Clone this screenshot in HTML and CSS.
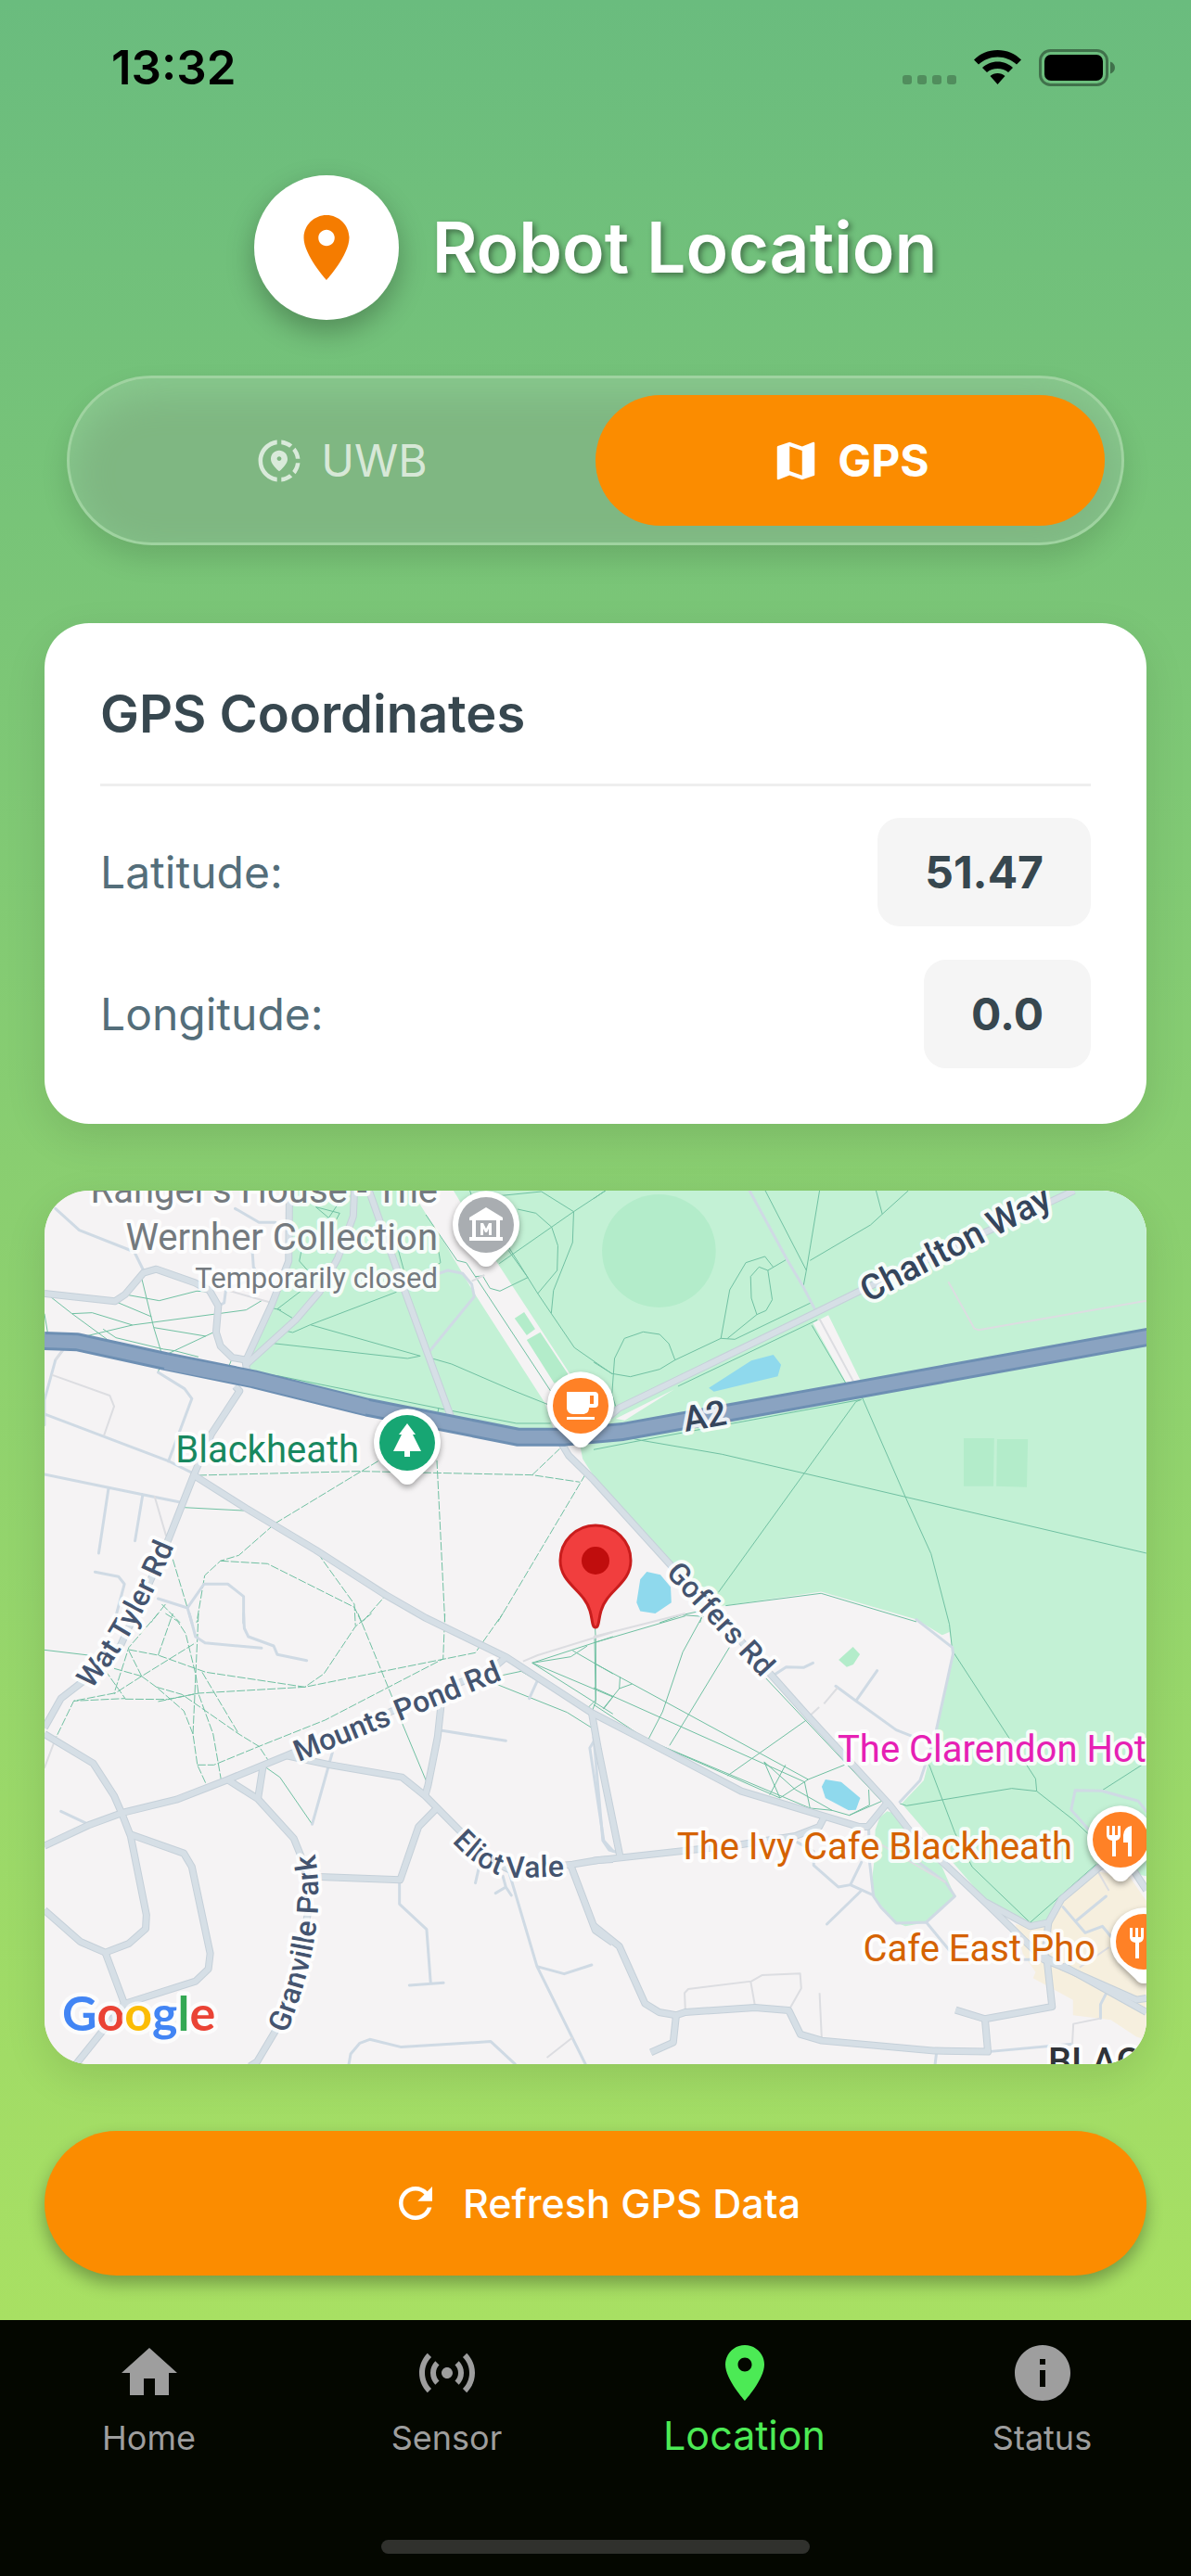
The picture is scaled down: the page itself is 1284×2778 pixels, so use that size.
FILE: index.html
```html
<!DOCTYPE html>
<html lang="en">
<head>
<meta charset="utf-8">
<meta name="viewport" content="width=device-width, initial-scale=1">
<title>Robot Location</title>
<link rel="stylesheet" href="styles.css">
</head>
<body>
<div class="status-bar">
  <time class="status-time">13:32</time>
  <div class="status-icons">
    <svg class="signal" viewBox="0 0 58 10" aria-label="No signal"><rect width="10" height="10" rx="3"/><rect x="16" width="10" height="10" rx="3"/><rect x="32" width="10" height="10" rx="3"/><rect x="48" width="10" height="10" rx="3"/></svg>
    <svg class="wifi" viewBox="0 0 51 38" aria-label="Wi-Fi"><path d="M25.500 0C35.500 0 44.500 4 51 10.500L46 15.500C40.500 10.500 33.500 7.500 25.500 7.500S10.500 10.500 5 15.500L0 10.500C6.500 4 15.500 0 25.500 0zM25.500 12.500C32 12.500 37.500 15 42 19L37 24C34 21.500 30 20 25.500 20S17 21.500 14 24L9 19C13.500 15 19 12.500 25.500 12.500zM25.500 25C28.500 25 31.500 26 33.500 28L25.500 37L17.500 28C19.500 26 22.500 25 25.500 25z"/></svg>
    <svg class="battery" viewBox="0 0 82 40" aria-label="Battery full"><rect x="1.500" y="1.500" width="72" height="37" rx="11" fill="none" stroke="#000" stroke-opacity=".4" stroke-width="3"/><rect x="6" y="6" width="63" height="28" rx="7"/><path d="M77 13.500c3 1 5 3.500 5 6.500s-2 5.500-5 6.500z" fill-opacity=".4"/></svg>
  </div>
</div>

<main class="screen">
  <header class="hero">
    <span class="hero-badge"><svg class="hero-icon" viewBox="0 0 24 24" aria-hidden="true"><path d="M12 2C8.130 2 5 5.130 5 9c0 5.250 7 13 7 13s7-7.750 7-13c0-3.870-3.130-7-7-7zm0 9.500c-1.380 0-2.500-1.120-2.500-2.500s1.120-2.500 2.500-2.500 2.500 1.120 2.500 2.500-1.120 2.500-2.500 2.500z"/></svg></span>
    <h1 class="hero-title">Robot Location</h1>
  </header>

  <div class="tabs" role="tablist" aria-label="Positioning system">
    <button class="tab" type="button" role="tab" aria-selected="false">
      <svg class="tab-icon" viewBox="0 0 24 24" aria-hidden="true"><path d="M13.020 19.930v2.020c2.010-.2 3.840-1 5.320-2.210l-1.420-1.430c-1.110.86-2.440 1.440-3.900 1.620zM4.030 12c0-4.050 3.030-7.410 6.950-7.930V2.050C5.950 2.580 2.030 6.840 2.030 12c0 5.160 3.920 9.420 8.950 9.950v-2.020C7.060 19.410 4.030 16.050 4.030 12zm15.920-1h2.020c-.2-2.010-1-3.840-2.210-5.320l-1.430 1.430c.86 1.100 1.440 2.430 1.620 3.890zm-1.610-6.740c-1.480-1.210-3.320-2.010-5.320-2.210v2.020c1.460.18 2.790.76 3.900 1.620l1.420-1.430zm-.01 12.640l1.430 1.420c1.210-1.480 2.010-3.310 2.210-5.320h-2.020c-.18 1.460-.76 2.790-1.620 3.900zM16 11.100C16 8.610 14.100 7 12 7s-4 1.610-4 4.100c0 1.660 1.330 3.630 4 5.900 2.670-2.270 4-4.240 4-5.900zm-4 .9c-.59 0-1.070-.48-1.070-1.070s.48-1.070 1.070-1.070 1.070.48 1.070 1.070S12.590 12 12 12z"/></svg>
      <span>UWB</span>
    </button>
    <button class="tab tab-active" type="button" role="tab" aria-selected="true">
      <svg class="tab-icon" viewBox="0 0 24 24" aria-hidden="true"><path d="M20.500 3l-.16.03L15 5.100 9 3 3.360 4.900c-.21.07-.36.25-.36.48V20.500c0 .28.22.5.5.5l.16-.03L9 18.900l6 2.100 5.640-1.900c.21-.07.36-.25.36-.48V3.500c0-.28-.22-.5-.5-.5zM15 19l-6-2.110V5l6 2.110V19z"/></svg>
      <span>GPS</span>
    </button>
  </div>

  <section class="card">
    <h2 class="card-title">GPS Coordinates</h2>
    <dl class="readings">
      <div class="reading"><dt>Latitude:</dt><dd>51.47</dd></div>
      <div class="reading"><dt>Longitude:</dt><dd>0.0</dd></div>
    </dl>
  </section>

  <section class="map-card" aria-label="Map of Blackheath">
    <svg class="map" viewBox="48 1284 1188 942" preserveAspectRatio="xMidYMid slice">
      <defs>
        <path id="a2" d="M20 528L110 532L350 594L590 652L900 743L1310 839H1440L1597 822L1757 788L2217 690L3040 513"/>
        <!-- through roads, one group per map tile -->
        <g id="roads">
          <g class="tile-nw">
            <path d="M20 375L212 400L240 378L290 308L325 296L430 340L470 365L494 415L488 500L500 545L532 582L570 590"/>
            <path d="M688 42L686 270L640 410L568 595L572 625"/>
            <path d="M865 42L862 125L820 260L770 370L705 460L570 605"/>
            <path d="M905 42L985 310L1068 580L1130 780"/>
            <path d="M540 675L552 690L475 830L428 960L360 1165L310 1300L225 1520L125 1630L65 1685L20 1780"/>
            <path d="M430 965L570 1070L760 1205L950 1350L1060 1425L1280 1552L1510 1730L1640 1810L1920 1985L2240 2100L2265 2100L2320 2020"/>
            <path d="M1430 860L1450 900L1517 978L1740 1270L1920 1500L2100 1740L2325 2030L2380 2115L2590 2350L2745 2530L2810 2560"/>
          </g>
          <g class="tile-ne">
            <path d="M40 775L70 745L600 440L720 370L1310 42"/>
          </g>
          <g class="tile-sw">
            <path d="M20 390L153 485L210 590L232 650L255 720L298 975L296 1020L250 1068L186 1097L118 1062L20 960"/>
            <path d="M20 752L140 685L232 645L380 602L515 540L680 460L960 320L1240 180L1280 140"/>
            <path d="M255 715L400 776L422 820L472 1100L467 1150L432 1190L238 1263L186 1097"/>
            <path d="M238 1263L105 1460"/>
            <path d="M522 540L602 600L700 728L735 830L740 960L700 1200L650 1350L600 1450L580 1465"/>
            <path d="M616 495L602 600"/>
            <path d="M680 460L800 490L995 530L1058 590L1150 700L1220 790L1290 830L1460 812L1530 798L1570 795"/>
            <path d="M1102 290L1092 400L1066 555L1058 590"/>
            <path d="M1088 632L1040 690L990 862L770 852"/>
            <path d="M1455 815L1522 1025L1570 1065"/>
            <path d="M1512 320L1530 440L1590 790"/>
          </g>
          <g class="tile-se">
            <path d="M0 800L230 770L400 748L550 720L615 690L628 660"/>
            <path d="M0 1010L70 1077L140 1262L178 1290L225 1300L250 1290L440 1275L532 1284L564 1362L622 1382L930 1415L1075 1418L1067 1312L1250 1272L1235 1110"/>
            <path d="M1067 1312L987 1283"/>
            <path d="M225 1300L217 1388L156 1420"/>
            <path d="M1070 935L1190 1012L1240 1000L1275 925L1380 820L1450 790L1507 895"/>
            <path d="M1240 1000L1230 1110L1280 1145L1480 1250L1507 1245"/>
            <path d="M1280 1140L1507 1290"/>
          </g>
        </g>
        <g id="poi">
          <path class="poi-shape" d="M0 45C-4 45-7 43-9 40L-28 22A36 36 0 1 1 28 22L9 40C7 43 4 45 0 45z"/>
        </g>
        <path id="path-charlton" d="M936 1405L1160 1288"/>
        <path id="path-tyler" d="M98 1822Q148 1765 194 1652"/>
        <path id="path-goffers" d="M717 1697L838 1828"/>
        <path id="path-eliot" d="M487 1986Q520 2022 552 2025L640 2023"/>
        <path id="path-granville" d="M309 2193C330 2140 356 2060 336 1984"/>
      </defs>

      <rect class="land" x="48" y="1284" width="1188" height="942"/>

      <g class="tile-nw">
        <path class="park" d="M690 42L692 250L650 400L570 600V640L1000 750L1310 830L1410 820L1385 730L1190 370L1110 210L1020 42z"/>
        <path class="pitch" d="M1302 455L1328 435L1358 490L1335 510zM1335 525L1372 500L1450 640L1410 665z"/>
      </g>
      <g class="tile-ne">
        <path class="park" d="M-382 42L-277 250L-62 640L0 800L-40 850L-30 910L0 965L210 1250L290 1390L360 1385L620 1340L880 1430L950 1480L970 1470L980 1530L930 1810L900 1950L840 2025L1070 2340L1190 2425L1240 2410L1280 2330L1370 2230L1507 2260V42z"/>
        <ellipse class="pitch" cx="178" cy="237" rx="155" ry="183"/>
        <path class="pitch" d="M1009 843H1092L1090 998H1009zM1100 846H1184L1181 1001L1098 998z"/>
        <path class="land" d="M598 470L640 445L727 655L688 662zM60 780L220 685L85 785z"/>
        <path class="water" d="M314 680L430 592L490 573L511 605L502 643L328 692zM145 1275L182 1285L210 1325L212 1375L168 1410L127 1403L117 1375L127 1300z"/>
      </g>
      <g class="tile-se">
        <path class="park" d="M780 660L800 640L830 650L870 710L950 820L985 915L905 1000L850 1012L825 1000L765 920L757 880L765 800L768 700z"/>
        <path class="pitch" d="M668 150L707 108L726 132L708 165L690 173z"/>
        <path class="town" d="M1150 1005L1190 1015L1240 1000L1290 920L1370 835L1460 850L1507 930V1380L1480 1370L1410 1315L1307 1300V1250L1198 1180L1205 1160L1170 1100z"/>
        <path class="water" d="M632 537L675 545L727 597L715 635L695 637L632 597L622 560z"/>
      </g>

      <g class="trails">
        <g class="tile-nw">
          <path d="M20 370L95 440L210 540M95 440L150 437L260 477L125 515M212 400L312 450M240 378L333 398L435 367L480 370M285 325L318 485L342 578L482 500M318 485L460 513M260 477L570 428L612 398M180 490L215 518L345 555L375 560L440 580M20 440L30 510L125 515L215 545L330 575L523 610L530 590M330 628L335 612M170 540L172 525"/>
          <path d="M575 628L660 642L1090 745L1307 795H1400M1095 745L1090 775M635 535L1010 585L1045 577L745 476L980 370M745 476L697 501L675 495M1068 582L1130 603L1290 685L1395 735M720 240L715 270L760 330L655 425L697 455M640 422L665 428M760 95L795 130L835 60M760 95L825 115L805 160M970 170L1000 300M1060 305L1100 275L1095 240M1060 120L1145 268L1170 275L1400 690"/>
          <path d="M1195 320L1215 318L1235 358L1262 367L1338 323L1285 235M1250 60L1375 45L1463 110L1260 278M1180 42L1185 60L1240 140L1310 270L1365 375L1465 550L1568 635M1463 110L1550 42M1463 110L1460 210L1408 365L1402 438M1310 102L1360 115L1403 160L1420 220L1418 300L1365 375"/>
          <path d="M398 1067L575 1078"/>
        </g>
        <g class="tile-ne">
          <path d="M0 68L32 42M468 42L580 300L616 42M580 300L572 350M770 42L787 118L858 42M787 118L755 153L590 268M527 264L475 300L487 395L470 430L445 443L430 390L428 320L451 289L475 300M490 290L467 255L415 275L371 363L347 520L385 523L592 405M445 443L365 520M347 520L222 590L180 620L100 644L50 634L0 597M222 590L205 537L180 507L135 499L84 520L57 585L50 700L60 740M595 478L690 670M230 675L610 460"/>
          <path d="M0 880L130 850L730 718L715 725L340 1342M90 840L130 850L350 895L575 957L850 1033L1507 1215M728 700L850 1033L920 1217L970 1445L978 1530L1205 1945L1208 1985M0 855L20 850M290 1440L300 1400L240 1415L180 1440M240 1415L300 1420M360 1385L620 1345L880 1437"/>
        </g>
        <g class="tile-se">
          <path d="M0 95L250 8M2 0L6 90V280L-20 310M0 160L585 537L684 490M585 537L508 597L148 410M0 240L575 545L590 630L650 637L697 653L790 605M508 597L465 480M465 480L550 570L650 637M0 295L148 410L590 630M148 410L188 318L243 125L296 10M207 427L260 325L370 110M365 525L580 345M480 587L523 490M470 210L785 607M750 570L752 620L697 653M26 308L70 243L72 205M70 243L105 228"/>
          <path d="M835 615L853 622L1140 566L1208 575L1307 667L1350 715M915 490L985 710L1032 820L1190 1000L1370 812M1387 572L1495 490"/>
        </g>
        <g class="tile-sw">
          <path d="M20 118L140 135M620 495L662 530L750 682M1255 230L1445 320L1515 372M1268 200L1320 187L1512 320M1570 75L1350 160L1455 140L1500 105M1350 160L1570 270M1350 160L1570 325M1460 120L1570 195M1520 75L1523 285L1512 320M1545 308L1570 270M990 340L1062 545"/>
        </g>
      </g>
      <g class="trails trails-dashed">
        <g class="tile-nw">
          <path d="M440 963L880 950L1350 962L1480 985M1350 962L1425 877M930 917L650 1118L550 1222L500 1240L457 1287L435 1440M500 1240L628 1249L865 1390L885 1440L950 1352M765 1215L865 1380L868 1450M1090 915L1112 1440M1495 960L1255 1440M370 1235L410 1392M340 1380L390 1440M350 1380L310 1440"/>
        </g>
        <g class="tile-sw">
          <path d="M330 0L250 110L210 258L100 283L50 405M250 117L330 135L460 190L730 238L1195 127L1270 0M330 135L370 0M350 0L383 25L405 65L433 200L440 260L480 390L502 540M440 0L425 390L437 490L462 555M437 490H482L605 430L785 345L1107 147L1112 0M185 183L240 275L100 283M240 277L355 278L440 258L730 238L782 195L868 42L912 0M210 178L285 203L432 95M285 203L210 260M285 203L250 120M285 203L325 238L400 315L425 390M325 238L395 262L550 390L605 430L630 475M450 190L550 390M330 285L440 258M875 0L992 340"/>
        </g>
      </g>

      <g class="streets">
        <g class="tile-nw">
          <path d="M50 100L115 170L265 240L290 300M540 100L605 145H650M587 240L590 290L610 320L515 360L510 405L494 415M1068 565L1192 385L1185 345L1160 310L1120 300L1070 320M20 765L360 918L428 958M20 960L195 1003L390 1050M75 550L50 590L20 720V800M330 630L402 683L422 715L358 918M195 1003L168 1215M288 1025L267 1175M158 1276L222 1291L238 1315L210 1440M330 1362L410 1392L455 1315H520L563 1355V1440M410 1392L422 1440"/>
        </g>
        <g class="tile-ne">
          <path d="M425 42L527 264L570 350L605 430"/>
        </g>
        <g class="tile-sw">
          <path d="M415 0L432 75L458 95L612 112M563 0L565 48L576 75L645 105L655 133L735 152M65 640L140 682M805 450L750 682M1100 378L1278 412M1365 215L1342 275M1525 400L1507 435L1545 735L1570 768M988 865V940L1062 1022L1073 1195M1015 1203L1108 1195M1285 830L1363 1142L1495 1458M1363 1142L1437 1166L1512 1137M1195 872L1205 820M1270 850L1278 885L1250 905M1278 885L1293 912M850 1458L855 1425L880 1390L907 1378L993 1403L1237 1385L1303 1458"/>
        </g>
        <g class="tile-se">
          <path d="M490 200L525 173L572 175L598 160M660 235L715 283L825 377L870 398M715 283L773 185M880 20L978 110L980 130L930 400L890 540L835 610M0 400L25 735L42 765L70 775M750 690L752 800L763 915L783 950L825 1002L907 999L985 915L960 870L880 800M763 912L700 878L667 885L600 815V770L555 740M700 878L730 805M727 900L636 1005M907 999L970 1090M1507 640L1485 607L1385 574L1313 572L1302 635L1350 700M1280 950L1340 1033L1387 1012L1410 1045M1317 993L1397 915M1397 1230L1382 1265V1310M1075 1418L1305 1393M935 1420L931 1458M1160 1120H1230M1070 935L1190 1070"/>
        </g>
      </g>
      <g class="lanes">
        <g class="tile-nw"><path d="M40 638L198 705L210 740L182 835M320 1030L352 1160M520 365L640 405M75 550L50 590M1185 335L1220 315"/></g>
        <g class="tile-ne"><path d="M967 337L1038 488L1050 493L1507 398M615 455L712 668"/></g>
        <g class="tile-sw"><path d="M50 405L20 500M1325 155L1365 135L1570 60M1460 1372L1390 1437"/></g>
        <g class="tile-se"><path d="M0 75L250 0M590 330L615 303M628 292L665 240M250 1285L248 1228L258 1215L430 1190L460 1170L563 1165L566 1213L532 1284M428 1190L440 1270M616 1228L622 1380M1305 1393L1308 1328L1382 1310M1375 835L1405 897M780 745L960 870M1325 1145L1405 1080"/></g>
      </g>

      <use class="road-casing" href="#roads"/>
      <use class="road-fill" href="#roads"/>
      <g class="tile-nw">
        <use class="a2-casing" href="#a2"/>
        <use class="a2-fill" href="#a2"/>
        <path class="a2-junction" d="M350 597L590 652L900 743"/>
      </g>

      <g class="label label-muted" text-anchor="end">
        <text x="472" y="1297">Ranger's House - The</text>
        <text x="472" y="1348">Wernher Collection</text>
        <text class="label-small" x="472" y="1389">Temporarily closed</text>
      </g>
      <text class="label label-park" x="387" y="1577" text-anchor="end">Blackheath</text>
      <text class="label label-hotel" x="903" y="1900">The Clarendon Hotel</text>
      <text class="label label-food" x="1156" y="2005" text-anchor="end">The Ivy Cafe Blackheath</text>
      <text class="label label-food" x="1181" y="2115" text-anchor="end">Cafe East Pho</text>
      <text class="label label-district" x="1130" y="2237">BLACKHEATH</text>

      <g class="label label-road">
        <text class="label-main" transform="translate(739 1544) rotate(-10)">A2</text>
        <text class="label-main"><textPath href="#path-charlton">Charlton Way</textPath></text>
        <text><textPath href="#path-tyler">Wat Tyler Rd</textPath></text>
        <text transform="translate(322 1900) rotate(-22)">Mounts Pond Rd</text>
        <text><textPath href="#path-goffers">Goffers Rd</textPath></text>
        <text><textPath href="#path-eliot">Eliot Vale</textPath></text>
        <text><textPath href="#path-granville">Granville Park</textPath></text>
      </g>

      <g transform="translate(524 1321)">
        <use href="#poi"/><circle r="30" fill="#a9adb1"/>
        <path d="M0-19L18-8V-5H-18V-8zM-15-5H-11V13H-15zM11-5H15V13H11zM-18 13H18V17H-18zM-6 11V-2H-3L0 4L3-2H6V11H3V4L1 8H-1L-3 4V11z" fill="#fff"/>
      </g>
      <g transform="translate(626 1516)">
        <use href="#poi"/><circle r="30" fill="#ff8126"/>
        <path d="M-15-15H15a4 4 0 0 1 4 4V-2a4 4 0 0 1-4 4H9C9 7 6 9 2 9H-8c-4 0-7-3-7-7zM10-11V-2H14V-11zM-15 12H15V15H-15z" fill="#fff" fill-rule="evenodd"/>
      </g>
      <g transform="translate(439 1556)">
        <use href="#poi"/><circle r="30" fill="#17a673"/>
        <path d="M0-21L9-9H6L15 9H3V15H-3V9H-15L-6-9H-9z" fill="#fff"/>
      </g>
      <g transform="translate(1208 1984)">
        <use href="#poi"/><circle r="30" fill="#ff8126"/>
        <path id="cutlery" d="M-15-15H-12V-5H-9V-15H-6V-5H-3V-15H0V-5Q0 0-5 1V18H-9V1Q-15 0-15-5zM12-15V18H8V3H3V-5Q4-14 12-15z" fill="#fff"/>
      </g>
      <g transform="translate(1233 2094)">
        <use href="#poi"/><circle r="30" fill="#ff8126"/><use href="#cutlery"/>
      </g>
      <path class="marker" d="M642 1755C638 1755 639 1747 636 1737C630 1715 604 1708 604 1683A38 38 0 1 1 680 1683C680 1708 654 1715 648 1737C645 1747 646 1755 642 1755z"/>
      <circle class="marker-dot" cx="642" cy="1683" r="15"/>

      <text class="google" x="67" y="2190"><tspan fill="#4285f4">G</tspan><tspan fill="#ea4335">o</tspan><tspan fill="#fbbc05">o</tspan><tspan fill="#4285f4">g</tspan><tspan fill="#34a853">l</tspan><tspan fill="#ea4335">e</tspan></text>
    </svg>
  </section>

  <button class="refresh" type="button">
    <svg class="refresh-icon" viewBox="0 0 24 24" aria-hidden="true"><path d="M17.650 6.350C16.200 4.900 14.210 4 12 4c-4.420 0-7.990 3.580-7.990 8s3.570 8 7.990 8c3.730 0 6.840-2.550 7.730-6h-2.080c-.82 2.330-3.040 4-5.650 4-3.310 0-6-2.690-6-6s2.690-6 6-6c1.660 0 3.140.69 4.220 1.780L13 11h7V4l-2.350 2.350z"/></svg>
    <span>Refresh GPS Data</span>
  </button>
</main>

<footer class="footer">
  <nav class="nav">
    <a class="nav-item" href="#home"><svg class="nav-icon" viewBox="0 0 24 24" aria-hidden="true"><path d="M10 20v-6h4v6h5v-8h3L12 3 2 12h3v8z"/></svg><span>Home</span></a>
    <a class="nav-item" href="#sensor"><svg class="nav-icon" viewBox="0 0 24 24" aria-hidden="true"><path d="M7.760 16.240C6.670 15.160 6 13.660 6 12s.67-3.160 1.760-4.240l1.420 1.420C8.450 9.900 8 10.900 8 12c0 1.100.45 2.100 1.170 2.830l-1.410 1.410zm8.480 0C17.330 15.160 18 13.660 18 12s-.67-3.160-1.760-4.240l-1.420 1.420C15.550 9.900 16 10.900 16 12c0 1.100-.45 2.100-1.170 2.830l1.410 1.410zM12 10c-1.100 0-2 .9-2 2s.9 2 2 2 2-.9 2-2-.9-2-2-2zm8 2c0 2.210-.9 4.210-2.350 5.650l1.420 1.420C20.880 17.260 22 14.760 22 12s-1.120-5.260-2.930-7.070l-1.420 1.420C19.100 7.790 20 9.790 20 12zM6.350 6.350L4.930 4.930C3.120 6.740 2 9.240 2 12s1.120 5.260 2.930 7.070l1.420-1.420C4.900 16.210 4 14.210 4 12s.9-4.210 2.350-5.650z"/></svg><span>Sensor</span></a>
    <a class="nav-item nav-item-active" href="#location" aria-current="page"><svg class="nav-icon" viewBox="0 0 24 24" aria-hidden="true"><path d="M12 2C8.130 2 5 5.130 5 9c0 5.250 7 13 7 13s7-7.750 7-13c0-3.870-3.130-7-7-7zm0 9.500c-1.380 0-2.500-1.120-2.500-2.500s1.120-2.500 2.500-2.500 2.500 1.120 2.500 2.500-1.120 2.500-2.500 2.500z"/></svg><span>Location</span></a>
    <a class="nav-item" href="#status"><svg class="nav-icon" viewBox="0 0 24 24" aria-hidden="true"><path d="M12 2C6.480 2 2 6.480 2 12s4.480 10 10 10 10-4.480 10-10S17.520 2 12 2zm1 15h-2v-6h2v6zm0-8h-2V7h2v2z"/></svg><span>Status</span></a>
  </nav>
  <div class="home-indicator"></div>
</footer>
</body>
</html>
```

FILE: styles.css
```css
* {
  box-sizing: border-box;
}

body {
  margin: 0;
  min-height: 100vh;
  display: flex;
  flex-direction: column;
  font-family: Inter, "Liberation Sans", sans-serif;
  background: linear-gradient(180deg, #6abc7e 0%, #a8e063 90%);
}

h1,
h2,
dl,
dd {
  margin: 0;
}

button {
  border: 0;
  font-family: inherit;
  cursor: pointer;
}

svg {
  display: block;
}

/* Status bar */
.status-bar {
  display: flex;
  justify-content: space-between;
  align-items: center;
  height: 104px;
  padding: 42px 82px 0 120px;
}

.status-time {
  font-size: 51px;
  line-height: 60px;
  font-weight: 600;
}

.status-icons {
  display: flex;
  align-items: center;
  gap: 19px;
}

.signal {
  width: 58px;
  height: 10px;
  margin-top: 26px;
  fill: rgba(0, 0, 0, 0.25);
}

.wifi {
  width: 51px;
  height: 38px;
}

.battery {
  width: 82px;
  height: 40px;
}

/* Screen */
.screen {
  flex: 1;
  display: flex;
  flex-direction: column;
  padding: 85px 48px 48px;
}

.hero {
  display: flex;
  justify-content: center;
  align-items: center;
  gap: 36px;
}

.hero-badge {
  display: flex;
  justify-content: center;
  align-items: center;
  width: 156px;
  height: 156px;
  border-radius: 50%;
  background: #fff;
  box-shadow: 0 12px 30px rgba(0, 0, 0, 0.28);
}

.hero-icon {
  width: 84px;
  height: 84px;
  fill: #f57c00;
}

.hero-title {
  font-size: 75px;
  line-height: 88px;
  font-weight: 600;
  color: #fff;
  text-shadow: 3px 3px 6px rgba(0, 0, 0, 0.4);
}

/* Tabs */
.tabs {
  display: flex;
  margin: 60px 24px 84px;
  padding: 18px;
  border: 3px solid #9fd3a0;
  border-radius: 92px;
  background: #7fb782;
  box-shadow: 0 15px 30px rgba(0, 0, 0, 0.12), inset 0 15px 42px #88ca8e;
}

.tab {
  flex: 1;
  display: flex;
  justify-content: center;
  align-items: center;
  gap: 18px;
  height: 141px;
  border-radius: 72px;
  background: transparent;
  color: rgba(255, 255, 255, 0.7);
  font-size: 48px;
  font-weight: 400;
}

.tab-active {
  background: #fb8c00;
  color: #fff;
  font-weight: 700;
}

.tab-icon,
.refresh-icon {
  width: 54px;
  height: 54px;
  fill: currentColor;
}

/* Coordinates card */
.card {
  padding: 60px;
  border-radius: 48px;
  background: #fff;
  box-shadow: 0 15px 45px rgba(0, 0, 0, 0.1);
}

.card-title {
  padding-bottom: 36px;
  border-bottom: 3px solid #eee;
  font-size: 56px;
  line-height: 77px;
  font-weight: 600;
  color: #37474f;
}

.readings {
  display: flex;
  flex-direction: column;
  gap: 36px;
  padding-top: 34px;
}

.reading {
  display: flex;
  justify-content: space-between;
  align-items: center;
  font-size: 48px;
  line-height: 69px;
}

.reading dt {
  color: #546e7a;
}

.reading dd {
  padding: 24px 51px;
  border-radius: 24px;
  background: #f5f5f5;
  color: #37474f;
  font-weight: 700;
}

/* Map */
.map-card {
  margin: 72px 0;
  border-radius: 48px;
  overflow: hidden;
  background: #f5f3f4;
  box-shadow: 0 15px 45px rgba(0, 0, 0, 0.1);
}

.map {
  width: 100%;
  height: auto;
  font-family: Roboto, "Liberation Sans", sans-serif;
}

.tile-nw {
  transform: translate(40px, 1270px) scale(0.3954, 0.3333);
}

.tile-ne {
  transform: translate(640px, 1270px) scale(0.3954, 0.3333);
}

.tile-sw {
  transform: translate(40px, 1740px) scale(0.3954, 0.3333);
}

.tile-se {
  transform: translate(640px, 1740px) scale(0.3954, 0.3333);
}

.map path {
  vector-effect: non-scaling-stroke;
}

.land {
  fill: #f5f3f4;
}

.park {
  fill: #c3f1d5;
}

.pitch {
  fill: #b3ecca;
}

.water {
  fill: #8fd9ed;
}

.town {
  fill: #f6efde;
}

.trails,
.streets,
.lanes,
.road-casing,
.road-fill,
.a2-casing,
.a2-fill,
.a2-junction {
  fill: none;
  stroke-linejoin: round;
}

.trails {
  stroke: #70c0a2;
  stroke-width: 1px;
}

.trails-dashed {
  stroke-dasharray: 9 2;
}

.streets {
  stroke: #cfdae4;
  stroke-width: 3px;
  stroke-linecap: round;
}

.lanes {
  stroke: #dcdde1;
  stroke-width: 2px;
}

.road-casing {
  stroke: #c5d0d9;
  stroke-width: 8px;
}

.road-fill {
  stroke: #d6dfe6;
  stroke-width: 6px;
}

.a2-casing {
  stroke: #6d8fb3;
  stroke-width: 20px;
}

.a2-fill {
  stroke: #8aa3c1;
  stroke-width: 14px;
}

.a2-junction {
  stroke: #8aa3c1;
  stroke-width: 16px;
}

.label {
  font-size: 40px;
  stroke: #fff;
  stroke-opacity: 0.85;
  stroke-width: 8px;
  stroke-linejoin: round;
  paint-order: stroke;
}

.label-small {
  font-size: 31px;
}

.label-muted {
  fill: #747a7f;
}

.label-park {
  fill: #188860;
}

.label-hotel {
  fill: #e620b4;
}

.label-food {
  fill: #d56200;
}

.label-district {
  fill: #2f3338;
  font-weight: 500;
}

.label-road {
  font-size: 32px;
  font-weight: 500;
  fill: #44546f;
}

.label-main {
  font-size: 38px;
  fill: #35455c;
}

.poi-shape {
  fill: #fff;
  filter: drop-shadow(0 3px 3px rgba(0, 0, 0, 0.35));
}

.marker {
  fill: #f13e3e;
  stroke: #c91d1d;
  stroke-width: 3px;
}

.marker-dot {
  fill: #c00d0d;
}

.google {
  font-family: Lato, sans-serif;
  font-size: 52px;
  font-weight: 700;
  stroke: #fff;
  stroke-opacity: 0.7;
  stroke-width: 9px;
  stroke-linejoin: round;
  paint-order: stroke;
}

/* Refresh button */
.refresh {
  display: flex;
  justify-content: center;
  align-items: center;
  gap: 24px;
  height: 156px;
  border-radius: 78px;
  background: #fb8c00;
  color: #fff;
  font-size: 43px;
  font-weight: 500;
  box-shadow: 0 9px 18px rgba(0, 0, 0, 0.3);
}

/* Bottom navigation */
.footer {
  display: flex;
  flex-direction: column;
  align-items: center;
  justify-content: space-between;
  height: 276px;
  padding: 21px 0 24px;
  background: #040700;
}

.nav {
  display: flex;
  align-self: stretch;
}

.nav-item {
  flex: 1;
  display: flex;
  flex-direction: column;
  align-items: center;
  gap: 10px;
  color: #9e9e9e;
  font-size: 36px;
  line-height: 48px;
  text-decoration: none;
}

.nav-item-active {
  color: #4cea55;
  font-size: 43px;
  line-height: 42px;
}

.nav-icon {
  width: 72px;
  height: 72px;
  fill: currentColor;
}

.home-indicator {
  width: 36%;
  height: 15px;
  border-radius: 8px;
  background: #30312d;
}
```
